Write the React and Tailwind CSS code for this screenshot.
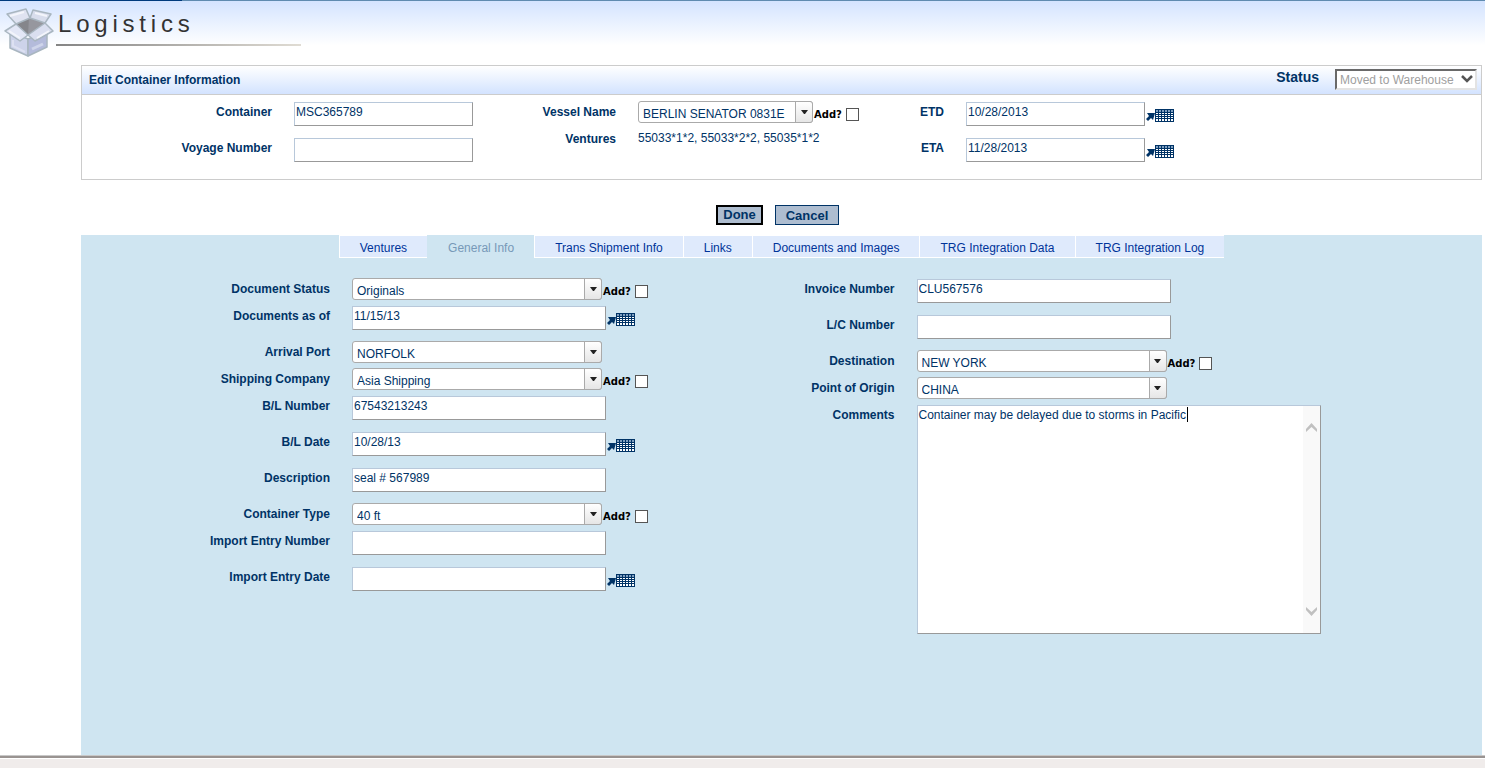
import React, { useState } from 'react';
import clsx from 'clsx';

const TABS = [
  'Ventures',
  'General Info',
  'Trans Shipment Info',
  'Links',
  'Documents and Images',
  'TRG Integration Data',
  'TRG Integration Log',
];

const BoxLogo = () => (
  <svg width="50" height="50" viewBox="0 0 50 50" aria-hidden="true">
    <g stroke="#a9b6c0" strokeWidth="1.5" strokeLinejoin="round">
      <path d="M6 24 L24 31 L24 48 L6 40 Z" fill="#cdd3ea" />
      <path d="M24 31 L43 24 L43 39 L24 48 Z" fill="#b4bbdb" />
      <path d="M12 16 L25 10 L41 15 L24 27 Z" fill="#85868b" stroke="none" />
      <path d="M25 10 L41 15 L24 27 Z" fill="#96979e" stroke="none" />
      <path d="M3 6 L22 1 L26 10 L12 16 Z" fill="#dfe3f1" />
      <path d="M29 2 L47 6 L41 15 L26 10 Z" fill="#d8ddec" />
      <path d="M12 16 L24 27 L16 33 L1 23 Z" fill="#e3e7f6" />
      <path d="M41 15 L49 23 L31 33 L24 27 Z" fill="#dadff0" />
    </g>
    <path d="M6 8 L20 4 M31 5 L43 8 M5 23 L16 30 M33 30 L45 23" stroke="#f3f5fb" strokeWidth="2" />
    <path d="M28 41 L39 36" stroke="#cfd5ea" strokeWidth="3" />
    <path d="M9 32 L9 38 L21 44" stroke="#dde1f2" strokeWidth="2" fill="none" />
  </svg>
);

const CalendarIcon = () => (
  <svg width="28" height="13" viewBox="0 0 28 13" shapeRendering="crispEdges" aria-hidden="true">
    <path d="M1 4 L9 4 L7 11 L5 9 L2 12 L0 10 L3 7 Z" fill="#003366" shapeRendering="auto" />
    <rect x="9" y="0" width="19" height="13" fill="#003366" />
    {[10, 13, 16, 19, 22, 25].map((x) => (
      <g key={x}>
        <rect x={x} y="1" width="2" height="2" fill="#7f9fc0" />
        {[4, 6, 8, 10].map((y) => (
          <rect key={y} x={x} y={y} width="2" height={y === 10 ? 2 : 1} fill="#fff" />
        ))}
      </g>
    ))}
  </svg>
);

const Field = ({ id, label, labelWidth, tall, children }) => (
  <div className={clsx('flex items-start gap-[22px]', tall ? 'min-h-[36px]' : 'min-h-[27px]')}>
    <label
      htmlFor={id}
      className={clsx('shrink-0 text-right font-bold leading-[22px] whitespace-nowrap', labelWidth)}
    >
      {label}
    </label>
    {children}
  </div>
);

const TextField = ({ id, label, labelWidth, width, value = '', date }) => (
  <Field id={id} label={label} labelWidth={labelWidth} tall>
    <div className="flex items-start gap-px pt-px">
      <input
        id={id}
        type="text"
        defaultValue={value}
        className={clsx(
          'h-6 border border-t-[#b8c8da] border-l-[#b8c8da] border-r-[#999] border-b-[#999] bg-white pl-px pb-1 outline-none',
          width
        )}
      />
      {date && (
        <button type="button" aria-label={`Pick ${label}`} className="pt-[7px]">
          <CalendarIcon />
        </button>
      )}
    </div>
  </Field>
);

const SelectField = ({ id, label, labelWidth, width, value, add }) => (
  <Field id={id} label={label} labelWidth={labelWidth}>
    <div className="flex items-center">
      <div className={clsx('relative', width)}>
        <select
          id={id}
          defaultValue={value}
          className="block h-[22px] w-full appearance-none rounded-[3px] border border-[#aaa] bg-white pl-1 pt-[3px] outline-none"
        >
          <option>{value}</option>
        </select>
        <span className="pointer-events-none absolute top-0 right-0 flex h-[22px] w-[18px] justify-center rounded-r-[3px] border border-[#aaa] bg-linear-to-b from-white to-[#e6e6e6] pt-2">
          <svg width="7" height="4" viewBox="0 0 7 4" aria-hidden="true">
            <path d="M0 0 H7 L4 4 H3 Z" fill="#222" />
          </svg>
        </span>
      </div>
      {add && (
        <label className="flex items-center gap-1 pl-px pt-[5px] font-['DejaVu_Sans'] text-[10px] leading-[13px] font-bold text-black">
          Add?
          <input
            type="checkbox"
            className="size-[13px] appearance-none border border-[#555] bg-white checked:bg-[#003366]"
          />
        </label>
      )}
    </div>
  </Field>
);

const CommentsField = () => (
  <Field id="comments" label="Comments" labelWidth="w-[113px]">
    <div className="pt-px">
      <div className="relative flex h-[229px] w-[404px] border border-t-[#b8c8da] border-l-[#b8c8da] border-r-[#999] border-b-[#999] bg-white">
        <textarea
          id="comments"
          defaultValue="Container may be delayed due to storms in Pacific"
          className="flex-1 resize-none overflow-hidden pt-px pl-px leading-4 outline-none"
        />
        <div className="flex w-[17px] flex-col items-center justify-between bg-[#f9f9f9] pt-[17px] pb-[17px]">
          <svg width="11" height="9" viewBox="0 0 11 9" aria-hidden="true">
            <path d="M0 9 V6 L5.5 0 L11 6 V9 L5.5 4 Z" fill="#c0c0c0" />
          </svg>
          <svg width="11" height="9" viewBox="0 0 11 9" aria-hidden="true">
            <path d="M0 0 V3 L5.5 9 L11 3 V0 L5.5 5 Z" fill="#c0c0c0" />
          </svg>
        </div>
        <span className="absolute top-px left-[269px] h-[15px] w-px bg-black" />
      </div>
    </div>
  </Field>
);

const Header = () => (
  <header className="bg-linear-to-b from-[#d3e3ff] to-white to-70%">
    <div className="flex h-px bg-[#5f8bb0]">
      <div className="w-[182px] bg-[#003b7d]" />
    </div>
    <div className="flex h-16 items-start pt-[7px] pl-1">
      <BoxLogo />
      <div className="pl-[2px]">
        <h1 className="pb-1 pl-[2px] text-2xl leading-[32px] tracking-[0.2em] text-[#333]">Logistics</h1>
        <div className="h-[2px] w-[245px] bg-linear-to-r from-[#858585] to-[#e0dcd4]" />
      </div>
    </div>
  </header>
);

const ContainerPanel = () => (
  <section className="mr-[3px] ml-[81px] border border-[#ccc]">
    <div className="flex h-[29px] items-start justify-between border-b border-[#ccc] bg-linear-to-b from-white to-[#d3e3ff] pr-1 pl-[7px]">
      <h2 className="leading-[28px] font-bold">Edit Container Information</h2>
      <div className="flex items-start gap-4 pt-[3px]">
        <label htmlFor="status" className="text-sm leading-4 font-bold">
          Status
        </label>
        <div className="relative">
          <select
            id="status"
            disabled
            className="block h-[21px] w-[142px] appearance-none border-2 border-t-[#696969] border-l-[#696969] border-r-[#e3e3e3] border-b-[#e3e3e3] bg-white pl-[3px] text-[#a0a0a0] opacity-100"
          >
            <option>Moved to Warehouse</option>
          </select>
          <svg
            width="12"
            height="8"
            viewBox="0 0 12 8"
            aria-hidden="true"
            className="pointer-events-none absolute top-[6px] right-1"
          >
            <path d="M1 1 L6 6 L11 1" fill="none" stroke="#555" strokeWidth="2.5" />
          </svg>
        </div>
      </div>
    </div>

    <div className="grid grid-cols-[440fr_380fr_579fr] pt-[6px] pb-[6px]">
      <div>
        <TextField id="container" label="Container" labelWidth="w-[190px]" width="w-[179px]" value="MSC365789" />
        <TextField id="voyage" label="Voyage Number" labelWidth="w-[190px]" width="w-[179px]" />
      </div>
      <div>
        <SelectField
          id="vessel"
          label="Vessel Name"
          labelWidth="w-[94px]"
          width="w-[175px]"
          value="BERLIN SENATOR 0831E"
          add
        />
        <div className="flex gap-[22px] leading-[22px]">
          <span className="w-[94px] text-right font-bold">Ventures</span>
          <span className="leading-5 whitespace-nowrap">55033*1*2, 55033*2*2, 55035*1*2</span>
        </div>
      </div>
      <div>
        <TextField id="etd" label="ETD" labelWidth="w-[42px]" width="w-[179px]" value="10/28/2013" date />
        <TextField id="eta" label="ETA" labelWidth="w-[42px]" width="w-[179px]" value="11/28/2013" date />
      </div>
    </div>
  </section>
);

const GeneralInfo = () => (
  <div className="grid grid-cols-2 pt-5">
    <div>
      <SelectField id="docStatus" label="Document Status" labelWidth="w-[249px]" width="w-[250px]" value="Originals" add />
      <TextField id="docsAsOf" label="Documents as of" labelWidth="w-[249px]" width="w-[254px]" value="11/15/13" date />
      <SelectField id="port" label="Arrival Port" labelWidth="w-[249px]" width="w-[250px]" value="NORFOLK" />
      <SelectField id="shipper" label="Shipping Company" labelWidth="w-[249px]" width="w-[250px]" value="Asia Shipping" add />
      <TextField id="blNumber" label="B/L Number" labelWidth="w-[249px]" width="w-[254px]" value="67543213243" />
      <TextField id="blDate" label="B/L Date" labelWidth="w-[249px]" width="w-[254px]" value="10/28/13" date />
      <TextField id="description" label="Description" labelWidth="w-[249px]" width="w-[254px]" value="seal # 567989" />
      <SelectField id="type" label="Container Type" labelWidth="w-[249px]" width="w-[250px]" value="40 ft" add />
      <TextField id="entryNumber" label="Import Entry Number" labelWidth="w-[249px]" width="w-[254px]" />
      <TextField id="entryDate" label="Import Entry Date" labelWidth="w-[249px]" width="w-[254px]" date />
    </div>
    <div>
      <TextField id="invoice" label="Invoice Number" labelWidth="w-[113px]" width="w-[254px]" value="CLU567576" />
      <TextField id="lc" label="L/C Number" labelWidth="w-[113px]" width="w-[254px]" />
      <SelectField id="destination" label="Destination" labelWidth="w-[113px]" width="w-[250px]" value="NEW YORK" add />
      <SelectField id="origin" label="Point of Origin" labelWidth="w-[113px]" width="w-[250px]" value="CHINA" />
      <CommentsField />
    </div>
  </div>
);

export default function App() {
  const [activeTab, setActiveTab] = useState('General Info');

  return (
    <div className="flex min-h-screen flex-col bg-white font-['Liberation_Sans',Arial,sans-serif] text-xs text-[#003366]">
      <Header />

      <main className="flex flex-1 flex-col">
        <ContainerPanel />

        {/* Form actions */}
        <div className="flex justify-center gap-3 pt-[25px] pb-[10px] pl-[70px] text-[13px] leading-4 font-bold">
          <button type="button" className="h-5 w-[47px] border-2 border-black bg-[#aebdd0]">
            Done
          </button>
          <button type="button" className="h-5 w-16 border border-[#003366] bg-[#aebdd0] pt-px">
            Cancel
          </button>
        </div>

        <section className="mr-[3px] ml-[81px] flex-1 bg-[#cfe5f1]">
          <div className="flex justify-center" role="tablist">
            {TABS.map((tab) => (
              <button
                key={tab}
                type="button"
                role="tab"
                aria-selected={tab === activeTab}
                onClick={() => setActiveTab(tab)}
                className={clsx(
                  'h-[23px] border-y border-l px-5 pt-[3px] whitespace-nowrap',
                  tab === activeTab
                    ? 'border-[#cfe5f1] bg-[#cfe5f1] text-[#7799b8]'
                    : 'border-white bg-[#dfeafc] text-[#003399]'
                )}
              >
                {tab}
              </button>
            ))}
          </div>
          <GeneralInfo />
        </section>
      </main>

      <footer className="h-[13px] border-t border-[#c8c8c8] bg-[#f0eceb]">
        <div className="h-[3px] border-t-2 border-[#999391] bg-white" />
      </footer>
    </div>
  );
}
